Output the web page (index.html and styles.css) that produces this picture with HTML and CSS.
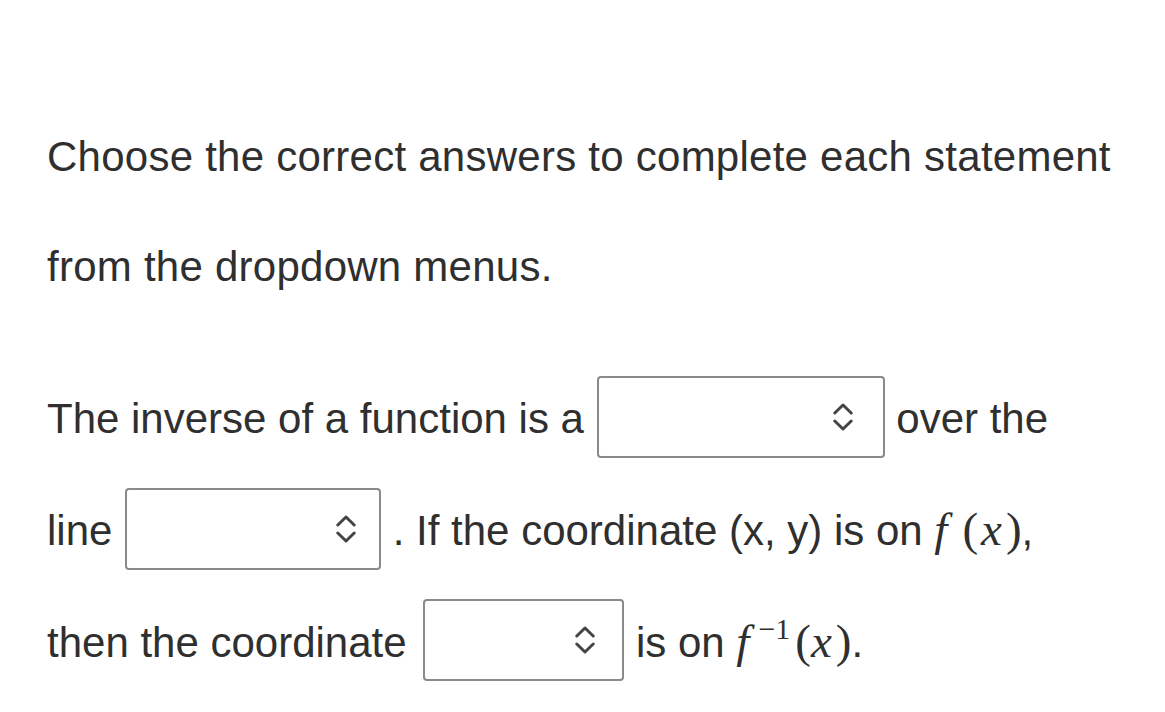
FILE: index.html
```html
<!DOCTYPE html>
<html>
<head>
<meta charset="utf-8">
<link rel="stylesheet" href="styles.css">
</head>
<body>
<main class="question">
  <p class="prompt">Choose the correct answers to complete each statement<br>from the dropdown menus.</p>
  <p class="statement">The inverse of a function is a <span class="select w1"><span class="chev"><svg viewBox="0 0 20 30" width="20" height="30"><path d="M1.8 11 L10 3 L18.2 11 M1.8 19 L10 27 L18.2 19" fill="none" stroke="#444" stroke-width="3" stroke-linecap="round" stroke-linejoin="round"/></svg></span></span> over the<br>line <span class="select w2"><span class="chev"><svg viewBox="0 0 20 30" width="20" height="30"><path d="M1.8 11 L10 3 L18.2 11 M1.8 19 L10 27 L18.2 19" fill="none" stroke="#444" stroke-width="3" stroke-linecap="round" stroke-linejoin="round"/></svg></span></span> . If the coordinate (x, y) is on <span class="math"><i>f</i><span class="paren">(</span><i>x</i><span class="paren">)</span></span>,<br>then the coordinate <span class="select w3"><span class="chev"><svg viewBox="0 0 20 30" width="20" height="30"><path d="M1.8 11 L10 3 L18.2 11 M1.8 19 L10 27 L18.2 19" fill="none" stroke="#444" stroke-width="3" stroke-linecap="round" stroke-linejoin="round"/></svg></span></span> is on <span class="math"><i>f</i><sup>−1</sup><span class="paren">(</span><i>x</i><span class="paren">)</span></span>.</p>
</main>
</body>
</html>
```

FILE: styles.css
```css
html, body {
  margin: 0;
  padding: 0;
  background: #ffffff;
}
.question {
  padding: 102px 20px 0 47px;
  font-family: "Liberation Sans", Arial, Helvetica, sans-serif;
  font-size: 42px;
  color: #2f2f2f;
}
.question p {
  margin: 0;
  line-height: 110px;
  white-space: nowrap;
}
.prompt {
  letter-spacing: 0.25px;
}
.statement {
  margin-top: 42px !important;
}
.select {
  display: inline-flex;
  justify-content: flex-end;
  align-items: center;
  box-sizing: border-box;
  height: 82px;
  border: 2px solid #8a8a8a;
  border-radius: 4px;
  background: #fff;
  vertical-align: middle;
  margin: 0 0 9px 1px;
}
.w1 { width: 288px; padding-right: 30px; }
.w2 { width: 256px; padding-right: 23px; }
.w3 { width: 201px; padding-right: 27px; margin-left: 5px; margin-bottom: 11px; }
.chev svg { display: block; }
.math {
  font-family: "Liberation Serif", "Times New Roman", serif;
  font-size: 47px;
}
.math i {
  font-style: italic;
}
.paren {
  margin-left: 15px;
}
.paren + i + .paren {
  margin-left: 4px;
}
.math i + .paren + i {
  margin-left: 3px;
}
.math sup {
  font-size: 30px;
  line-height: 0;
  vertical-align: 18px;
  margin-left: 9px;
}
.math sup + .paren {
  margin-left: 5px;
}
```
